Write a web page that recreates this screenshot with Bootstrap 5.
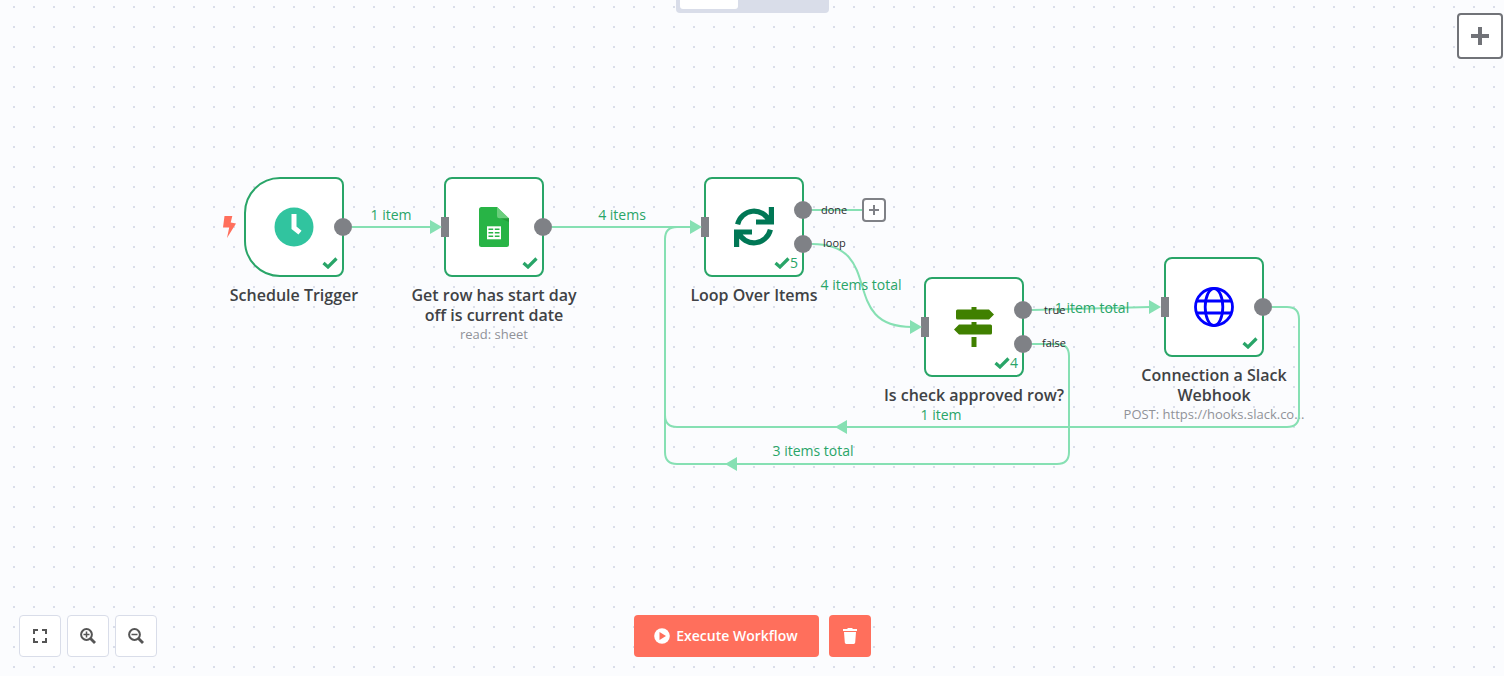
<!DOCTYPE html>
<html lang="en">
<head>
<meta charset="utf-8">
<meta name="viewport" content="width=device-width, initial-scale=1">
<title>Workflow editor</title>
<link href="https://cdn.jsdelivr.net/npm/bootstrap@5.3.0/dist/css/bootstrap.min.css" rel="stylesheet">
<style>
  :root { --ok: #29a568; --wire: #86e0b3; --port: #7f8186; --accent: #ff6f5c; --line: #d9dde9; }
  body { font-family: "Open Sans", sans-serif; color: #404245; background: #fbfcfe; }
  .flow-page { overflow: hidden; background-image: conic-gradient(at 2px 2px, transparent 75%, var(--line) 0); background-size: 20px 20px; background-position: 13px 6px; }
  svg { display: block; flex: none; }

  /* top bar */
  .view-tabs { background: var(--line); border-radius: 0 0 4px 4px; padding: 0 4px 4px; width: 153px; }
  .view-tab { height: 9px; border: 0; padding: 0; background: transparent; border-radius: 0 0 3px 3px; }
  .view-tab.active { background: #fff; width: 58px; }
  .add-node { width: 46px; height: 46px; margin: 13px 1px 0 0; background: #fff; border: 2px solid #717378; border-radius: 4px; }

  /* free canvas */
  .board, .wires { position: absolute; inset: 0; }
  .wires { width: 100%; height: 100%; overflow: visible; pointer-events: none; }
  .wires path { fill: none; stroke: var(--wire); stroke-width: 2; }
  .wires polygon { fill: var(--wire); }
  .flow-node { position: absolute; width: 100px; }
  .node-box { position: relative; height: 100px; background: #fff; border: 2px solid var(--ok); border-radius: 8px; }
  .is-trigger .node-box { border-radius: 36px 8px 8px 36px; }
  .node-status { position: absolute; right: 4px; bottom: 2px; height: 20px; color: var(--ok); font-size: 14px; line-height: 20px; }
  .node-text { width: 200px; margin: 8px -50px 0; text-align: center; }
  .node-name { font-size: 16px; line-height: 20px; font-weight: 600; margin: 0; padding: 0 12px; }
  .node-sub { font-size: 13px; line-height: 18px; color: #909298; margin: 0; padding: 0 8px; }
  .port-in, .port-out { position: absolute; background: var(--port); }
  .port-in { left: -5px; top: 38px; width: 8px; height: 20px; }
  .port-out { right: -10px; top: 39px; width: 18px; height: 18px; border-radius: 50%; }
  .port-out.upper { top: 22px; }
  .port-out.lower { top: 56px; }
  .bolt { position: absolute; left: -22px; top: 39px; }
  .n-trigger { left: 244px; top: 177px; }
  .n-sheet { left: 444px; top: 177px; }
  .n-loop { left: 704px; top: 177px; }
  .n-if { left: 924px; top: 277px; }
  .n-hook { left: 1164px; top: 257px; }
  .wire-label { position: absolute; width: 120px; text-align: center; font-size: 14px; line-height: 20px; color: var(--ok); }
  .l-a { left: 331px; top: 205px; } .l-b { left: 562px; top: 205px; }
  .l-c { left: 801px; top: 275px; } .l-d { left: 1032px; top: 298px; }
  .l-e { left: 881px; top: 405px; } .l-f { left: 753px; top: 441px; }
  .port-label { position: absolute; font-size: 11px; line-height: 14px; color: #2c2d30; }
  .p-done { left: 821px; top: 203px; } .p-loop { left: 823px; top: 236px; }
  .p-true { left: 1044px; top: 303px; } .p-false { left: 1042px; top: 336px; }
  .add-next { position: absolute; left: 862px; top: 198px; width: 24px; height: 24px; padding: 0; background: #fff; border: 2px solid var(--port); border-radius: 4px; }

  /* bottom bar */
  .bottom-bar { padding: 0 19px 19px; }
  .tool-group { gap: 6px; }
  .run-group { gap: 10px; }
  .tool-btn { width: 42px; height: 42px; background: #fff; border: 1px solid var(--line); border-radius: 4px; padding: 0; color: #555; }
  .run-btn, .trash-btn { height: 42px; border: 0; border-radius: 4px; background: var(--accent); color: #fff; }
  .run-btn { width: 185px; font-size: 14px; font-weight: 600; line-height: 20px; padding: 0; gap: 6px; }
  .trash-btn { width: 42px; padding: 0; }
</style>
</head>
<body>
<main class="flow-page position-relative min-vh-100 d-flex flex-column justify-content-between">

  <section class="board" aria-label="Workflow canvas">
    <article class="flow-node is-trigger n-trigger">
      <svg class="bolt" width="15" height="22" viewBox="0 0 15 22"><path fill="#ff6f5c" d="M2.500 0h7.800L8.700 6.400l5.300 1L5 22l2.200-10.500H1z"/></svg>
      <div class="node-box d-flex align-items-center justify-content-center">
        <svg width="40" height="40"><circle cx="20" cy="20" r="19.500" fill="#31c49f"/><path d="M20 7v13.800l6 4.800" fill="none" stroke="#fff" stroke-width="5"/></svg>
        <div class="node-status d-flex align-items-center"><svg width="16" height="12"><path d="M1.500 6l4.500 4L14.500 1.500" fill="none" stroke="#29a568" stroke-width="3.200"/></svg></div>
        <span class="port-out"></span>
      </div>
      <div class="node-text"><h2 class="node-name">Schedule Trigger</h2></div>
    </article>

    <article class="flow-node n-sheet">
      <div class="node-box d-flex align-items-center justify-content-center">
        <svg width="30" height="40"><path fill="#28b446" d="M2.500 0H18l12 12v25.500a2.500 2.500 0 0 1-2.500 2.500h-25A2.500 2.500 0 0 1 0 37.500v-35A2.500 2.500 0 0 1 2.500 0z"/><path fill="#219b38" d="M19.500 10.500L30 15v-4z"/><path fill="#6ace7c" d="M18 0l12 11.300h-9.500A2.500 2.500 0 0 1 18 8.800z"/><path fill="#fff" d="M8 19.300h14v13H8z"/><path d="M9.500 22.300h4.700M15.800 22.300h4.700M9.500 25.800h4.700M15.800 25.800h4.700M9.500 29.300h4.700M15.800 29.300h4.700" stroke="#28b446" stroke-width="1.600"/></svg>
        <div class="node-status d-flex align-items-center"><svg width="16" height="12"><path d="M1.500 6l4.500 4L14.500 1.500" fill="none" stroke="#29a568" stroke-width="3.200"/></svg></div>
        <span class="port-in"></span><span class="port-out"></span>
      </div>
      <div class="node-text"><h2 class="node-name">Get row has start day off is current date</h2><p class="node-sub">read: sheet</p></div>
    </article>

    <article class="flow-node n-loop">
      <div class="node-box d-flex align-items-center justify-content-center">
        <svg width="40" height="40"><g fill="none" stroke="#007755" stroke-width="5.200"><path d="M3.600 17.400A16.900 17.300 0 0 1 35.500 14.500M22 15h15.400V0"/><path d="M36.400 22.600A16.900 17.300 0 0 1 4.500 25.500M18 25H2.600v15"/></g></svg>
        <div class="node-status d-flex align-items-center"><svg width="16" height="12"><path d="M1.500 6l4.500 4L14.500 1.500" fill="none" stroke="#29a568" stroke-width="3.200"/></svg><span>5</span></div>
        <span class="port-in"></span><span class="port-out upper"></span><span class="port-out lower"></span>
      </div>
      <div class="node-text"><h2 class="node-name">Loop Over Items</h2></div>
    </article>

    <article class="flow-node n-if">
      <div class="node-box d-flex align-items-center justify-content-center">
        <svg width="40" height="40"><g fill="#408000"><path d="M17.500 0h5v2.500H35l5 5-5 5H3.500a1.500 1.500 0 0 1-1.500-1.500V4a1.500 1.500 0 0 1 1.500-1.500h14z"/><path d="M17.500 15h5v2.500h14A1.500 1.500 0 0 1 38 19v7a1.500 1.500 0 0 1-1.500 1.500H5l-5-5 5-5h12.500z"/><path d="M17.500 30h5v10h-5z"/></g></svg>
        <div class="node-status d-flex align-items-center"><svg width="16" height="12"><path d="M1.500 6l4.500 4L14.500 1.500" fill="none" stroke="#29a568" stroke-width="3.200"/></svg><span>4</span></div>
        <span class="port-in"></span><span class="port-out upper"></span><span class="port-out lower"></span>
      </div>
      <div class="node-text"><h2 class="node-name text-nowrap px-0">Is check approved row?</h2></div>
    </article>

    <article class="flow-node n-hook">
      <div class="node-box d-flex align-items-center justify-content-center">
        <svg width="40" height="40"><g fill="none" stroke="#00f" stroke-width="2.800"><circle cx="20" cy="20" r="18.500"/><ellipse cx="20" cy="20" rx="8.800" ry="18.500"/><path d="M2.500 14h35M2.500 26h35"/></g></svg>
        <div class="node-status d-flex align-items-center"><svg width="16" height="12"><path d="M1.500 6l4.500 4L14.500 1.500" fill="none" stroke="#29a568" stroke-width="3.200"/></svg></div>
        <span class="port-in"></span><span class="port-out"></span>
      </div>
      <div class="node-text"><h2 class="node-name">Connection a Slack Webhook</h2><p class="node-sub text-nowrap">POST: https://hooks.slack.co...</p></div>
    </article>

    <svg class="wires" aria-hidden="true">
      <path d="M352 227H432M552 227H692M812 210H862"/>
      <path d="M812 244C887 244 837 327 912 327"/>
      <path d="M1032 310L1150 307"/>
      <path d="M1032 344H1057Q1069 344 1069 356V452Q1069 464 1057 464H677Q665 464 665 452V239Q665 227 677 227"/>
      <path d="M1272 307H1287Q1299 307 1299 319V415Q1299 427 1287 427H677Q665 427 665 415"/>
      <polygon points="430,220 442,227 430,234"/>
      <polygon points="690,220 702,227 690,234"/>
      <polygon points="910,320 922,327 910,334"/>
      <polygon points="1149,300 1161,307 1149,314"/>
      <polygon points="847,420 835,427 847,434"/>
      <polygon points="737,457 725,464 737,471"/>
    </svg>

    <span class="wire-label l-a">1 item</span>
    <span class="wire-label l-b">4 items</span>
    <span class="wire-label l-c">4 items total</span>
    <span class="wire-label l-d">1 item total</span>
    <span class="wire-label l-e">1 item</span>
    <span class="wire-label l-f">3 items total</span>
    <span class="port-label p-done">done</span>
    <span class="port-label p-loop">loop</span>
    <span class="port-label p-true">true</span>
    <span class="port-label p-false">false</span>
    <button class="add-next d-flex align-items-center justify-content-center" type="button" aria-label="Add next node"><svg width="10" height="10"><path d="M5 0v10M0 5h10" stroke="#7f8186" stroke-width="2"/></svg></button>
  </section>

  <header class="position-relative row g-0 align-items-start">
    <div class="col"></div>
    <div class="col-auto view-tabs d-flex">
      <button class="view-tab active" type="button" aria-label="Editor"></button>
      <button class="view-tab flex-fill" type="button" aria-label="Executions"></button>
    </div>
    <div class="col d-flex justify-content-end">
      <button class="add-node d-flex align-items-center justify-content-center" type="button" aria-label="Add node"><svg width="18" height="18"><path d="M9 0v18M0 9h18" stroke="#717378" stroke-width="4"/></svg></button>
    </div>
  </header>

  <footer class="bottom-bar position-relative row g-0 align-items-center">
    <div class="col d-flex tool-group">
      <button class="tool-btn d-flex align-items-center justify-content-center" type="button" aria-label="Fit to view"><svg width="14" height="14"><path d="M1 5V1H5M9 1h4V5M13 9v4H9M5 13H1V9" fill="none" stroke="currentColor" stroke-width="2"/></svg></button>
      <button class="tool-btn d-flex align-items-center justify-content-center" type="button" aria-label="Zoom in"><svg width="16" height="16" fill="none" stroke="currentColor"><circle cx="6.500" cy="6.500" r="5.400" stroke-width="2"/><path d="M10.500 10.500l4.500 4.500" stroke-width="2.800"/><path d="M6.500 3.500v6M3.500 6.500h6" stroke-width="1.500"/></svg></button>
      <button class="tool-btn d-flex align-items-center justify-content-center" type="button" aria-label="Zoom out"><svg width="16" height="16" fill="none" stroke="currentColor"><circle cx="6.500" cy="6.500" r="5.400" stroke-width="2"/><path d="M10.500 10.500l4.500 4.500" stroke-width="2.800"/><path d="M3.500 6.500h6" stroke-width="1.500"/></svg></button>
    </div>
    <div class="col-auto d-flex run-group">
      <button class="run-btn d-flex align-items-center justify-content-center" type="button"><svg width="16" height="16"><circle cx="8" cy="8" r="7.800" fill="#fff"/><path d="M5.500 4v8l6.500-4z" fill="#ff6f5c"/></svg><span>Execute Workflow</span></button>
      <button class="trash-btn d-flex align-items-center justify-content-center" type="button" aria-label="Clear execution data"><svg width="14" height="16" fill="#fff"><path d="M0 1h4l1-1h4l1 1h4v2H0zM1 4h12l-.8 10.600a1.500 1.500 0 0 1-1.500 1.400H3.300a1.500 1.500 0 0 1-1.500-1.400z"/></svg></button>
    </div>
    <div class="col"></div>
  </footer>
</main>
<script src="https://cdn.jsdelivr.net/npm/bootstrap@5.3.0/dist/js/bootstrap.bundle.min.js"></script>
</body>
</html>
